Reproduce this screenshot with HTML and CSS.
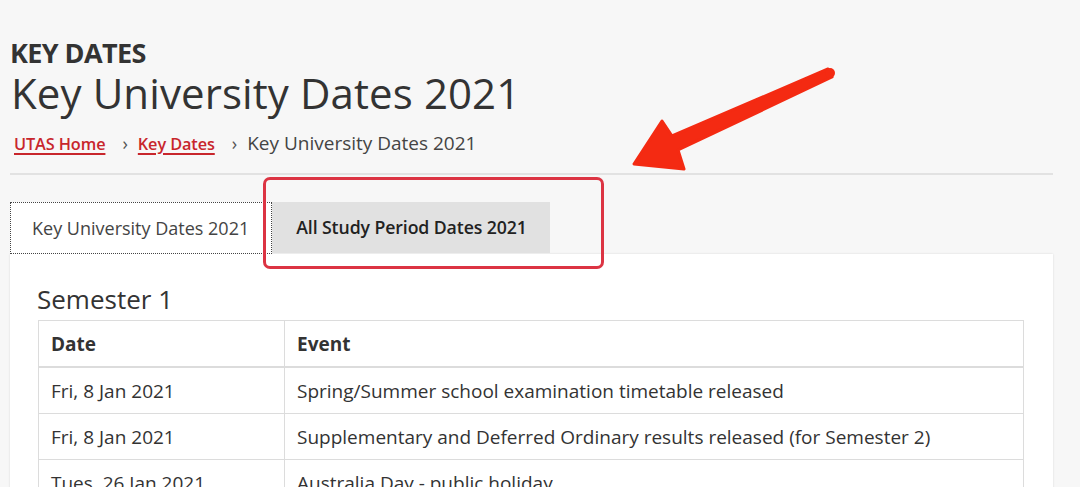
FILE: index.html
```html
<!DOCTYPE html>
<html lang="en">
<head>
<meta charset="utf-8">
<title>Key University Dates 2021</title>
<link rel="stylesheet" href="styles.css">
</head>
<body>
<div class="page">
  <header class="page-head">
    <div class="kicker">KEY DATES</div>
    <h1 class="title">Key University Dates 2021</h1>
    <nav class="crumbs">
      <a href="#">UTAS Home</a>
      <span class="sep">›</span>
      <a href="#">Key Dates</a>
      <span class="sep">›</span>
      <span class="current">Key University Dates 2021</span>
    </nav>
  </header>
  <hr class="rule">
  <div class="tabs">
    <div class="tab active">Key University Dates 2021</div>
    <div class="tab inactive">All Study Period Dates 2021</div>
  </div>
  <section class="panel">
    <h2 class="sem">Semester 1</h2>
    <table class="dates">
      <thead>
        <tr><th class="c-date">Date</th><th>Event</th></tr>
      </thead>
      <tbody>
        <tr><td>Fri, 8 Jan 2021</td><td>Spring/Summer school examination timetable released</td></tr>
        <tr><td>Fri, 8 Jan 2021</td><td>Supplementary and Deferred Ordinary results released (for Semester 2)</td></tr>
        <tr><td>Tues, 26 Jan 2021</td><td>Australia Day - public holiday</td></tr>
      </tbody>
    </table>
  </section>
  <div class="highlight"></div>
  <svg class="arrow" width="1080" height="487" viewBox="0 0 1080 487">
    <polygon points="828,69 832,77 678,150 684,169 634,164 662,121 672,136" fill="#f42a12" stroke="#f42a12" stroke-width="3" stroke-linejoin="round"/>
    <circle cx="830" cy="73" r="5" fill="#f42a12"/>
  </svg>
</div>
</body>
</html>
```
FILE: styles.css
```css
html, body {
  margin: 0;
  padding: 0;
}
body {
  background: #f7f7f7;
  font-family: "Open Sans", "Noto Sans", sans-serif;
  color: #333;
  height: 487px;
  overflow: hidden;
}
.page {
  position: relative;
  padding: 0 27px 0 10px;
}
.page-head {
  padding-top: 36px;
}
.kicker {
  font-size: 27px;
  font-weight: 700;
  line-height: 34px;
  letter-spacing: -0.6px;
  color: #333;
}
.title {
  margin: 0;
  font-size: 42px;
  font-weight: 400;
  line-height: 46px;
  letter-spacing: 0.1px;
  color: #333;
  margin-left: 1px;
}
.crumbs {
  margin-top: 14px;
  font-size: 19px;
  line-height: 26px;
  padding-left: 4px;
  color: #444;
  display: flex;
  align-items: baseline;
}
.crumbs a {
  color: #c8262c;
  font-size: 16.3px;
  font-weight: 600;
  letter-spacing: -0.1px;
  text-decoration: underline;
  text-decoration-thickness: 1.5px;
  text-underline-offset: 3px;
}
.crumbs .sep {
  margin: 0 10px 0 17px;
  color: #555;
  font-size: 18px;
}
.rule {
  margin: 16px 0 0 0;
  border: 0;
  height: 2px;
  background: #e2e2e2;
}
.tabs {
  display: flex;
  margin-top: 27px;
  height: 52px;
}
.tab {
  font-size: 18px;
  line-height: 50px;
  white-space: nowrap;
}
.tab.active {
  background: #fff;
  color: #444;
  padding: 0 22px 0 21px;
  border: 1px dotted #444;
}
.tab.inactive {
  background: #e1e1e1;
  color: #222;
  font-weight: 600;
  font-size: 17.7px;
  letter-spacing: -0.1px;
  padding: 0 23px 0 24px;
  height: 51px;
  line-height: 51px;
}
.panel {
  background: #fff;
  padding: 27px 29px 40px 28px;
  box-shadow: 0 0 2px rgba(0,0,0,0.12);
}
.sem {
  margin: 0 0 3px -1px;
  font-size: 26px;
  font-weight: 400;
  line-height: 36px;
  color: #333;
}
.dates {
  width: 100%;
  border-collapse: collapse;
  font-size: 19px;
  color: #333;
}
.dates th, .dates td {
  border: 1px solid #dcdcdc;
  text-align: left;
  padding: 0 12px;
  height: 45px;
}
.dates th {
  font-weight: 700;
  border-bottom: 2px solid #dcdcdc;
}
.dates .c-date {
  width: 221px;
}
.highlight {
  position: absolute;
  left: 263px;
  top: 177px;
  width: 335px;
  height: 86px;
  border: 3px solid #dc3443;
  border-radius: 7px;
}
.arrow {
  position: absolute;
  left: 0;
  top: 0;
  pointer-events: none;
}
```
